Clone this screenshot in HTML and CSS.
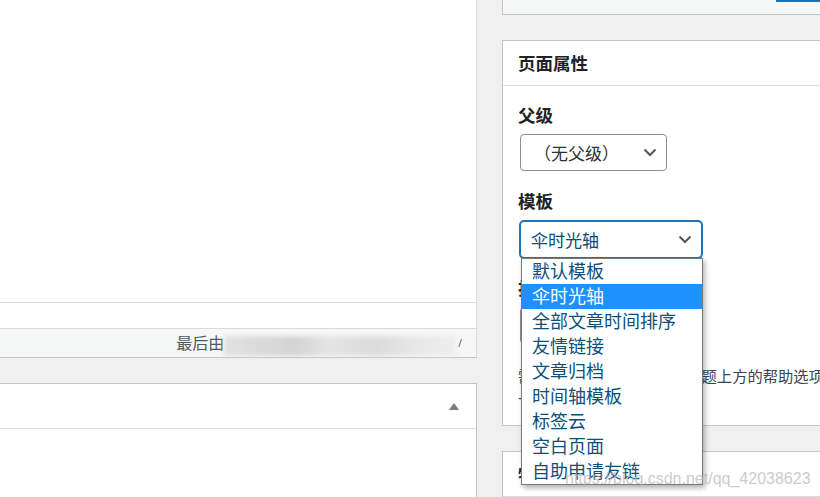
FILE: index.html
```html
<!DOCTYPE html>
<html lang="zh-CN">
<head>
    <meta charset="UTF-8">
    <title>编辑页面</title>
    <link rel="stylesheet" href="styles.css">
</head>
<body>
    <div class="screen">
        <div class="main">
            <div class="editor">
                <div class="editor-body"></div>
                <div class="editor-gap"></div>
                <div class="status">最后由<span class="smudge"></span><span class="tail">/</span></div>
            </div>
            <div class="postbox">
                <div class="postbox-head"><span class="toggle"></span></div>
            </div>
        </div>

        <div class="side">
            <div class="box box-top"><span class="btn-edge"></span></div>

            <div class="box attrs">
                <h2>页面属性</h2>
                <div class="inside">
                    <p class="label">父级</p>
                    <div class="select parent">
                        <span>（无父级）</span>
                        <svg width="14" height="9" viewBox="0 0 14 9"><path d="M1.5 1.5 L7 7 L12.5 1.5" fill="none" stroke="#50575e" stroke-width="2"/></svg>
                    </div>

                    <p class="label">模板</p>
                    <div class="template-field">
                        <div class="select focused">
                            <span>伞时光轴</span>
                            <svg width="14" height="9" viewBox="0 0 14 9"><path d="M1.5 1.5 L7 7 L12.5 1.5" fill="none" stroke="#50575e" stroke-width="2"/></svg>
                        </div>
                        <ul class="dropdown">
                            <li>默认模板</li>
                            <li class="active">伞时光轴</li>
                            <li>全部文章时间排序</li>
                            <li>友情链接</li>
                            <li>文章归档</li>
                            <li>时间轴模板</li>
                            <li>标签云</li>
                            <li>空白页面</li>
                            <li>自助申请友链</li>
                        </ul>
                    </div>

                    <p class="label">排序</p>
                    <div class="input">0</div>
                    <p class="help">需要帮助？可以使用屏幕标题上方的帮助选项卡。</p>
                </div>
            </div>

            <div class="box next">
                <h2>特色图像</h2>
            </div>
        </div>
    </div>

    <div class="watermark">https://blog.csdn.net/qq_42038623</div>
</body>
</html>
```

FILE: styles.css
```css
body {
    margin: 0;
    width: 820px;
    height: 497px;
    overflow: hidden;
    position: relative;
    background-color: #f0f0f1;
    font-family: "Noto Sans", "Noto Sans CJK SC", sans-serif;
    color: #3c434a;
}
.screen {
    display: flex;
    align-items: flex-start;
}

/* colonne de gauche */
.main {
    width: 477px;
    flex-shrink: 0;
}
.editor {
    background-color: #fff;
    border-right: 1px solid #dcdcde;
    border-bottom: 1px solid #c3c4c7;
}
.editor-body {
    height: 302px;
    border-bottom: 1px solid #dcdcde;
}
.editor-gap {
    height: 25px;
}
.status {
    height: 28px;
    border-top: 1px solid #dcdcde;
    background-color: #f6f7f7;
    display: flex;
    align-items: center;
    justify-content: flex-end;
    padding-right: 14px;
    font-size: 16px;
    line-height: 28px;
    color: #50575e;
}
.smudge {
    display: inline-block;
    width: 232px;
    height: 20px;
    margin-top: 6px;
    background: linear-gradient(90deg, #e2e2e2 0%, #d4d4d4 30%, #e4e4e4 45%, #dcdcdc 65%, #e8e8e8 85%, #eeeeee 100%);
    filter: blur(2px);
}
.tail {
    font-size: 10px;
    margin-left: 2px;
}
.postbox {
    margin-top: 25px;
    height: 200px;
    background-color: #fff;
    border-top: 1px solid #c3c4c7;
    border-right: 1px solid #c3c4c7;
}
.postbox-head {
    height: 44px;
    border-bottom: 1px solid #dcdcde;
    display: flex;
    align-items: center;
    justify-content: flex-end;
    padding-right: 17px;
}
.toggle {
    width: 0;
    height: 0;
    border-left: 5px solid transparent;
    border-right: 5px solid transparent;
    border-bottom: 7px solid #787c82;
}

/* colonne de droite */
.side {
    width: 392px;
    flex-shrink: 0;
    margin-left: 25px;
}
.box {
    background-color: #fff;
    border: 1px solid #c3c4c7;
    border-right: none;
}
.box h2 {
    margin: 0;
    height: 44px;
    line-height: 44px;
    padding-left: 15px;
    font-size: 17.5px;
    font-weight: bold;
    color: #1d2327;
    border-bottom: 1px solid #dcdcde;
}
.box-top {
    position: relative;
    height: 14px;
    border-top: none;
    background-color: #f6f7f7;
    margin-bottom: 25px;
}
.btn-edge {
    position: absolute;
    top: 0;
    left: 273px;
    width: 80px;
    height: 2px;
    background-color: #2271b1;
}
.attrs {
    margin-bottom: 25px;
}
.inside {
    padding: 0 15px 14px;
}
.label {
    margin: 18px 0 0;
    font-size: 17.5px;
    line-height: 24px;
    font-weight: bold;
    color: #1d2327;
}
.label:first-child {
    margin-top: 17px;
}
.select {
    box-sizing: border-box;
    height: 37px;
    border: 1px solid #8c8f94;
    border-radius: 4px;
    background-color: #fff;
    display: flex;
    align-items: center;
    justify-content: space-between;
    font-size: 17px;
    color: #2c3338;
}
.select.parent {
    width: 147px;
    margin: 7px 0 0 2px;
    padding: 0 9px 0 13px;
}
.template-field {
    position: relative;
    margin: 8px 0 0 2px;
}
.select.focused {
    width: 182px;
    padding: 0 9px 0 10px;
    border-color: #2271b1;
    box-shadow: 0 0 0 1px #2271b1;
    color: #0a4b78;
}
.dropdown {
    position: absolute;
    top: 37px;
    left: 1px;
    z-index: 2;
    width: 182px;
    box-sizing: border-box;
    margin: 0;
    padding: 0;
    list-style: none;
    background-color: #fff;
    border: 1px solid #7a7a7a;
    box-shadow: 2px 3px 5px rgba(0, 0, 0, 0.3);
}
.dropdown li {
    height: 25px;
    line-height: 25px;
    padding-left: 10px;
    font-size: 18px;
    color: #0e4f7a;
    white-space: nowrap;
}
.dropdown li.active {
    background-color: #1e90ff;
    color: #fff;
}
.input {
    box-sizing: border-box;
    width: 80px;
    height: 37px;
    margin: 7px 0 0 2px;
    border: 1px solid #8c8f94;
    border-radius: 4px;
    padding-left: 10px;
    line-height: 35px;
    font-size: 17px;
}
.help {
    width: 312px;
    margin: 21px 0 0;
    font-size: 15.3px;
    line-height: 23px;
}
.next {
    height: 100px;
}

.watermark {
    position: absolute;
    left: 565px;
    top: 468px;
    font-family: "Liberation Sans", Arial, sans-serif;
    font-size: 16px;
    line-height: 22px;
    color: rgba(185, 185, 185, 0.75);
    z-index: 3;
}
```
